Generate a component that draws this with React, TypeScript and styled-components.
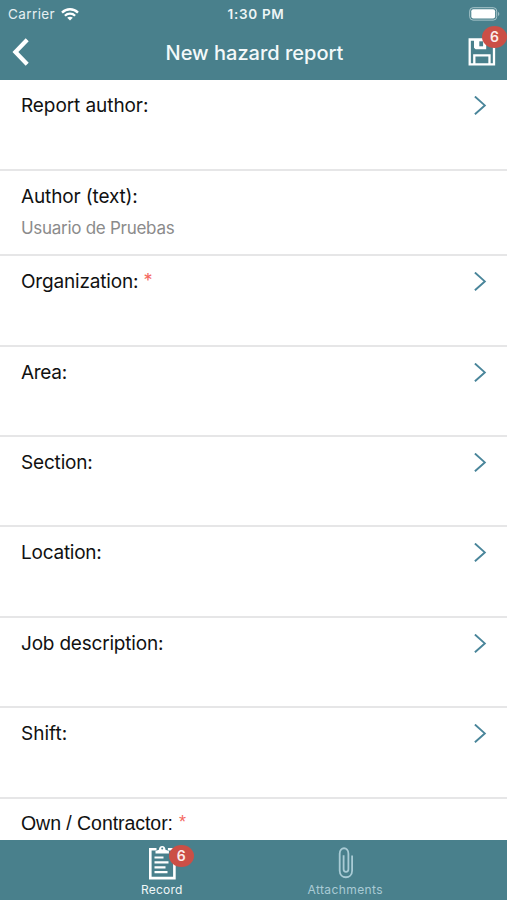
import React from "react";
import styled, { createGlobalStyle } from "styled-components";

const teal = "#49808c";

const GlobalStyle = createGlobalStyle`
  *, *::before, *::after { box-sizing: border-box; }
  body { margin: 0; background: #fff; }
  button { font: inherit; color: inherit; border: 0; padding: 0; background: none; }
`;

const Screen = styled.div`
  width: 507px;
  height: 900px;
  display: flex;
  flex-direction: column;
  overflow: hidden;
  background: #fff;
  font-family: Inter, "Liberation Sans", sans-serif;
`;

const Header = styled.header`
  flex: none;
  height: 79.5px;
  background: ${teal};
  color: #fff;
`;

const StatusBar = styled.div`
  height: 27px;
  padding: 0 7px 0 8px;
  display: grid;
  grid-template-columns: 1fr auto 1fr;
  align-items: center;
  font-size: 13.5px;
  line-height: 28px;
`;

const Carrier = styled.div`
  display: flex;
  align-items: center;
  gap: 6px;
  letter-spacing: 0.4px;
  color: #e6f0f2;
`;

const Clock = styled.div`
  padding-left: 4px;
  font-weight: 600;
  letter-spacing: 0.7px;
  color: #eef5f6;
`;

const BatterySlot = styled.div`
  display: flex;
  justify-content: flex-end;
`;

const NavBar = styled.div`
  height: 50px;
  padding: 0 9px 0 12px;
  display: grid;
  grid-template-columns: 30px 1fr 30px;
  align-items: center;
`;

const NavButton = styled.button`
  position: relative;
  width: 30px;
  height: 34px;
  display: flex;
  align-items: center;
`;

const Title = styled.h1`
  margin: 0;
  padding: 1px 1px 0 0;
  text-align: center;
  font-size: 20px;
  font-weight: 500;
  line-height: 26px;
  letter-spacing: 0;
  color: #f3f9fa;
`;

const Badge = styled.span<{ $x: number; $y: number }>`
  position: absolute;
  left: ${(p) => p.$x}px;
  top: ${(p) => p.$y}px;
  width: 25px;
  height: 22px;
  border-radius: 50%;
  background: #cb4f46;
  color: #fbeceb;
  font-size: 14px;
  font-weight: 600;
  line-height: 22px;
  text-align: center;
`;

const Form = styled.main`
  flex: 1;
  min-height: 0;
  overflow: hidden;
`;

const Row = styled.section<{ $height: number; $top?: number }>`
  height: ${(p) => p.$height}px;
  padding: ${(p) => p.$top ?? 13}px 20px 0 21px;
  border-bottom: 2px solid #e6e6e7;
`;

const RowHead = styled.div`
  height: 26px;
  display: flex;
  align-items: center;
  justify-content: space-between;
`;

const Label = styled.span<{ $spacing: number; $plain?: boolean }>`
  font-family: ${(p) => (p.$plain ? '"Liberation Sans", sans-serif' : "inherit")};
  font-size: ${(p) => (p.$plain ? 19.5 : 19)}px;
  line-height: 26px;
  letter-spacing: ${(p) => p.$spacing}px;
  color: #111;
  white-space: nowrap;
  display: flex;
`;

const Required = styled.span<{ $plain?: boolean }>`
  margin: ${(p) => (p.$plain ? "-1px 0 0 6px" : "-1px 0 0 5px")};
  font-family: ${(p) => (p.$plain ? '"Liberation Sans", sans-serif' : "inherit")};
  font-size: 18px;
  color: #f4685f;
`;

const Value = styled.div`
  margin-top: 6px;
  font-size: 17px;
  line-height: 24px;
  letter-spacing: -0.28px;
  color: #8b8b8b;
`;

const TabBar = styled.nav`
  flex: none;
  height: 60px;
  padding: 0 70px;
  display: grid;
  grid-template-columns: 1fr 1fr;
  background: ${teal};
`;

const Tab = styled.button<{ $active?: boolean }>`
  display: flex;
  flex-direction: column;
  align-items: center;
  padding-top: 5px;
  font-size: 12px;
  line-height: 16px;
  letter-spacing: ${(p) => (p.$active ? 0.2 : 0.4)}px;
  color: ${(p) => (p.$active ? "#f0f7f8" : "#a9cbd5")};
`;

const TabIcon = styled.span`
  position: relative;
  width: 28px;
  height: 37px;
`;

const WifiIcon = () => (
  <svg width="18" height="13" viewBox="0 0 18 13" fill="none" stroke="#fff" strokeWidth="2.3">
    <path d="M1 4.6C5.5.1 12.5.1 17 4.6" />
    <path d="M3.9 7.7c2.8-2.8 7.4-2.8 10.2 0" />
    <path d="M6.2 9.7c1.5-1.4 4.1-1.4 5.6 0L9 12.6z" fill="#fff" stroke="none" />
  </svg>
);

const BatteryIcon = () => (
  <svg width="31" height="14" viewBox="0 0 31 14">
    <rect x=".7" y=".7" width="27" height="12.4" rx="3.4" fill="none" stroke="#a9c5cb" />
    <rect x="2.3" y="2.3" width="23.8" height="9.2" rx="2" fill="#fff" />
    <path d="M29.1 4.7c1.6.8 1.6 3.6 0 4.4z" fill="#a9c5cb" />
  </svg>
);

const BackIcon = () => (
  <svg width="18" height="28" viewBox="0 0 18 28" fill="none" stroke="#fff" strokeWidth="4.2">
    <path d="M15.2 1.8 3.4 14l11.8 12.2" />
  </svg>
);

const SaveIcon = () => (
  <svg width="28" height="28" viewBox="0 0 28 28" fill="none" stroke="#fff" strokeWidth="2.3">
    <path d="M1.7 1.5h19.1l5.2 5.2v19.6H1.7z" />
    <path d="M6 1.5h12.2v9.7H7.6L6 9.7z" fill="#fff" stroke="none" />
    <path d="M11.3 3.3h3.8v5h-3.8z" fill={teal} stroke="none" />
    <path d="M6.3 26v-8.6h15.2V26" />
  </svg>
);

const ChevronIcon = () => (
  <svg width="13" height="20" viewBox="0 0 13 20" fill="none" stroke="#49859a" strokeWidth="1.9">
    <path d="m.9.5 9.9 8.9-9.9 8.9" />
  </svg>
);

const ClipboardIcon = () => (
  <svg width="28" height="35" viewBox="0 0 28 35" fill="none" stroke="#fff" strokeWidth="2.6">
    <path d="M8.5 4.3H2.3v28.8h24.1V4.3h-6.5" />
    <path d="M7.5 8.6V6.1l3.4-1.3C11 2.5 12.1 1 14.2 1s3.2 1.5 3.3 3.8l3.4 1.3v2.5z" fill="#fff" stroke="none" />
    <circle cx="14.2" cy="3.6" r="1" fill={teal} stroke="none" />
    <g strokeWidth="2.2">
      <path d="M6.5 12.5h9M6.5 17.4h14M6.5 22.3h11M6.5 27.2h13" />
    </g>
  </svg>
);

const ClipIcon = () => (
  <svg width="16" height="32" viewBox="0 0 16 32" fill="none" stroke="#a9cbd5" strokeWidth="1.8">
    <path d="M10.4 8.5v13.8c0 3.4-4.8 3.4-4.8 0V8.2M14.1 8.5v15.2c0 8.7-12.4 8.7-12.4 0V6.8c0-7.4 8.7-7.4 8.7 0v2" />
  </svg>
);

const ClipSlot = styled(TabIcon)`
  display: flex;
  justify-content: center;
  padding: 2px 0 0 1px;
`;

type Field = {
  label: string;
  height: number;
  spacing: number;
  top?: number;
  value?: string;
  required?: boolean;
  chevron?: boolean;
  plain?: boolean;
};

const fields: Field[] = [
  { label: "Report author:", height: 91.4, spacing: -0.08, chevron: true },
  { label: "Author (text):", height: 85.3, spacing: -0.14, value: "Usuario de Pruebas" },
  { label: "Organization:", height: 90.4, spacing: -0.17, required: true, chevron: true },
  { label: "Area:", height: 90.4, spacing: -0.3, chevron: true },
  { label: "Section:", height: 90.4, spacing: -0.17, chevron: true },
  { label: "Location:", height: 90.4, spacing: -0.24, chevron: true },
  { label: "Job description:", height: 90.4, spacing: -0.2, chevron: true },
  { label: "Shift:", height: 90.4, spacing: 0, chevron: true },
  { label: "Own / Contractor:", height: 90.4, spacing: -0.05, top: 11, required: true, plain: true },
];

export default function App() {
  return (
    <>
      <GlobalStyle />
      <Screen>
        <Header>
          <StatusBar>
            <Carrier>
              Carrier
              <WifiIcon />
            </Carrier>
            <Clock>1:30 PM</Clock>
            <BatterySlot>
              <BatteryIcon />
            </BatterySlot>
          </StatusBar>
          <NavBar>
            <NavButton aria-label="Back">
              <BackIcon />
            </NavButton>
            <Title>New hazard report</Title>
            <NavButton aria-label="Save">
              <SaveIcon />
              <Badge $x={14} $y={-9}>6</Badge>
            </NavButton>
          </NavBar>
        </Header>
        <Form>
          {fields.map((f) => (
            <Row key={f.label} $height={f.height} $top={f.top}>
              <RowHead>
                <Label $spacing={f.spacing} $plain={f.plain}>
                  {f.label}
                  {f.required && <Required $plain={f.plain}>*</Required>}
                </Label>
                {f.chevron && <ChevronIcon />}
              </RowHead>
              {f.value && <Value>{f.value}</Value>}
            </Row>
          ))}
        </Form>
        <TabBar>
          <Tab $active>
            <TabIcon>
              <ClipboardIcon />
              <Badge $x={21} $y={0}>6</Badge>
            </TabIcon>
            Record
          </Tab>
          <Tab>
            <ClipSlot>
              <ClipIcon />
            </ClipSlot>
            Attachments
          </Tab>
        </TabBar>
      </Screen>
    </>
  );
}
